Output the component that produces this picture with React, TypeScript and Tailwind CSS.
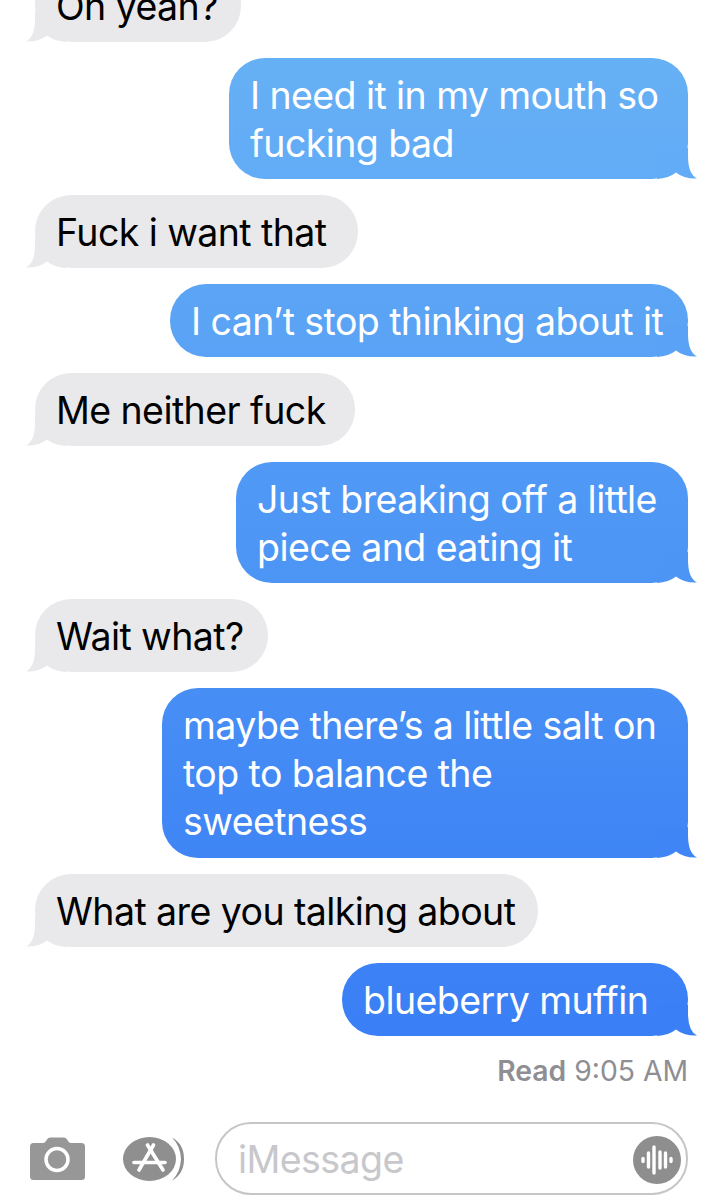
import React from "react";

const font = { fontFamily: '"Inter", "Noto Sans", sans-serif' };

function Tail({ color, side }: { color: string; side: "l" | "r" }) {
  return (
    <svg
      width="48"
      height="31"
      viewBox="0 0 48 31"
      className={side === "r" ? "absolute right-[-9px] bottom-0" : "absolute left-[-9px] bottom-0 -scale-x-100"}
    >
      <path d="M8 31 Q20 30 27 24.5 Q35 31 48 30.5 Q39 26 39 8 L39 0 L8 0 Z" fill={color} />
    </svg>
  );
}

const lineCls = "h-12 whitespace-nowrap text-[37.5px] leading-[48px] tracking-[-0.58px]";

function Sent({ lines, tail, cls }: { lines: string[]; tail: string; cls: string }) {
  return (
    <div className="flex justify-end pr-[34px]">
      <div className={`relative rounded-[36px] pl-[21px] pt-[14px] text-white ${cls}`}>
        <Tail color={tail} side="r" />
        <div className="relative">
          {lines.map((l) => (
            <div key={l} className={lineCls}>
              {l}
            </div>
          ))}
        </div>
      </div>
    </div>
  );
}

function Recv({ text, cls }: { text: string; cls: string }) {
  return (
    <div className="flex justify-start pl-[35px]">
      <div className={`relative rounded-[36px] bg-[#e9e9eb] pb-[11px] pl-[21px] pt-[14px] text-black ${cls}`}>
        <Tail color="#e9e9eb" side="l" />
        <div className={`relative ${lineCls}`}>{text}</div>
      </div>
    </div>
  );
}

export default function App() {
  return (
    <div className="h-[1200px] w-[722px] overflow-hidden bg-white" style={font}>
      <div className="flex flex-col gap-4">
        <Recv text="Oh yeah?" cls="mt-[-31px] w-[206px]" />
        <Sent lines={["I need it in my mouth so", "fucking bad"]} tail="#62abf6" cls="w-[459px] pb-[11px] bg-[linear-gradient(#66b0f5,#62abf6)]" />
        <Recv text="Fuck i want that" cls="w-[323px]" />
        <Sent lines={["I can’t stop thinking about it"]} tail="#59a2f5" cls="w-[518px] pb-[11px] bg-[linear-gradient(#5ca5f5,#59a2f5)]" />
        <Recv text="Me neither fuck" cls="w-[320px]" />
        <Sent lines={["Just breaking off a little", "piece and eating it"]} tail="#4d95f5" cls="w-[452px] pb-[11px] bg-[linear-gradient(#5199f5,#4d95f5)]" />
        <Recv text="Wait what?" cls="w-[233px]" />
        <Sent lines={["maybe there’s a little salt on", "top to balance the", "sweetness"]} tail="#3f85f5" cls="w-[526px] pb-[12px] bg-[linear-gradient(#478ef5,#3f85f5)]" />
        <Recv text="What are you talking about" cls="w-[503px]" />
        <Sent lines={["blueberry muffin"]} tail="#3a7ff5" cls="w-[346px] pb-[11px] bg-[linear-gradient(#3c81f5,#3a7ff5)]" />
      </div>

      <div className="mt-[17px] pr-[34px] text-right text-[28.3px] leading-[36px] text-[#8e8e93]">
        <span className="font-semibold">Read</span> 9:05 AM
      </div>

      <div className="mt-[33px] flex items-center pl-[30px]">
        <svg width="55" height="44" viewBox="0 0 55 44" className="shrink-0">
          <path
            d="M3.5 6 H13 Q15 6 16 4 L17 2.5 Q18 0.5 20.5 0.5 H33.5 Q36 0.5 37 2.5 L38 4 Q39 6 41 6 H51.5 Q55 6 55 9.5 V39.5 Q55 43 51.5 43 H3.5 Q0 43 0 39.5 V9.5 Q0 6 3.5 6 Z"
            fill="#979797"
          />
          <circle cx="27" cy="22.5" r="11" fill="none" stroke="#fff" strokeWidth="3.5" />
        </svg>

        <svg width="63" height="46" viewBox="0 0 63 46" className="ml-[37px] shrink-0">
          <ellipse cx="27.5" cy="23" rx="26.5" ry="22" fill="#8f8f8f" />
          <path d="M50 1.5 Q62 8 62 23 Q62 38 50 44.5 Q58.5 36 59 23 Q58.5 10 50 1.5 Z" fill="#8f8f8f" />
          <g fill="none" stroke="#fff" strokeWidth="3.6" strokeLinecap="round">
            <path d="M31.5 9 L17 34" />
            <path d="M25.5 9 L41 34" />
            <path d="M12 26.5 H43" />
          </g>
        </svg>

        <div className="relative ml-[30px] flex h-[73px] w-[473px] shrink-0 items-center rounded-[36px] border-2 border-[#c6c6c8] pl-[21px] pt-[3px] text-[37.5px] tracking-[-0.58px] text-[#c7c7cc]">
          iMessage
          <svg width="48" height="48" viewBox="0 0 48 48" className="absolute right-[5px] top-[12px]">
            <circle cx="24" cy="24" r="24" fill="#8e8e8e" />
            <g stroke="#fff" strokeWidth="3.4" strokeLinecap="round">
              <path d="M10 22.5 V25.5" />
              <path d="M15.5 17 V31" />
              <path d="M21 11 V37" />
              <path d="M27 16 V32" />
              <path d="M32.5 17 V31" />
              <path d="M38 22.5 V25.5" />
            </g>
          </svg>
        </div>
      </div>
    </div>
  );
}
